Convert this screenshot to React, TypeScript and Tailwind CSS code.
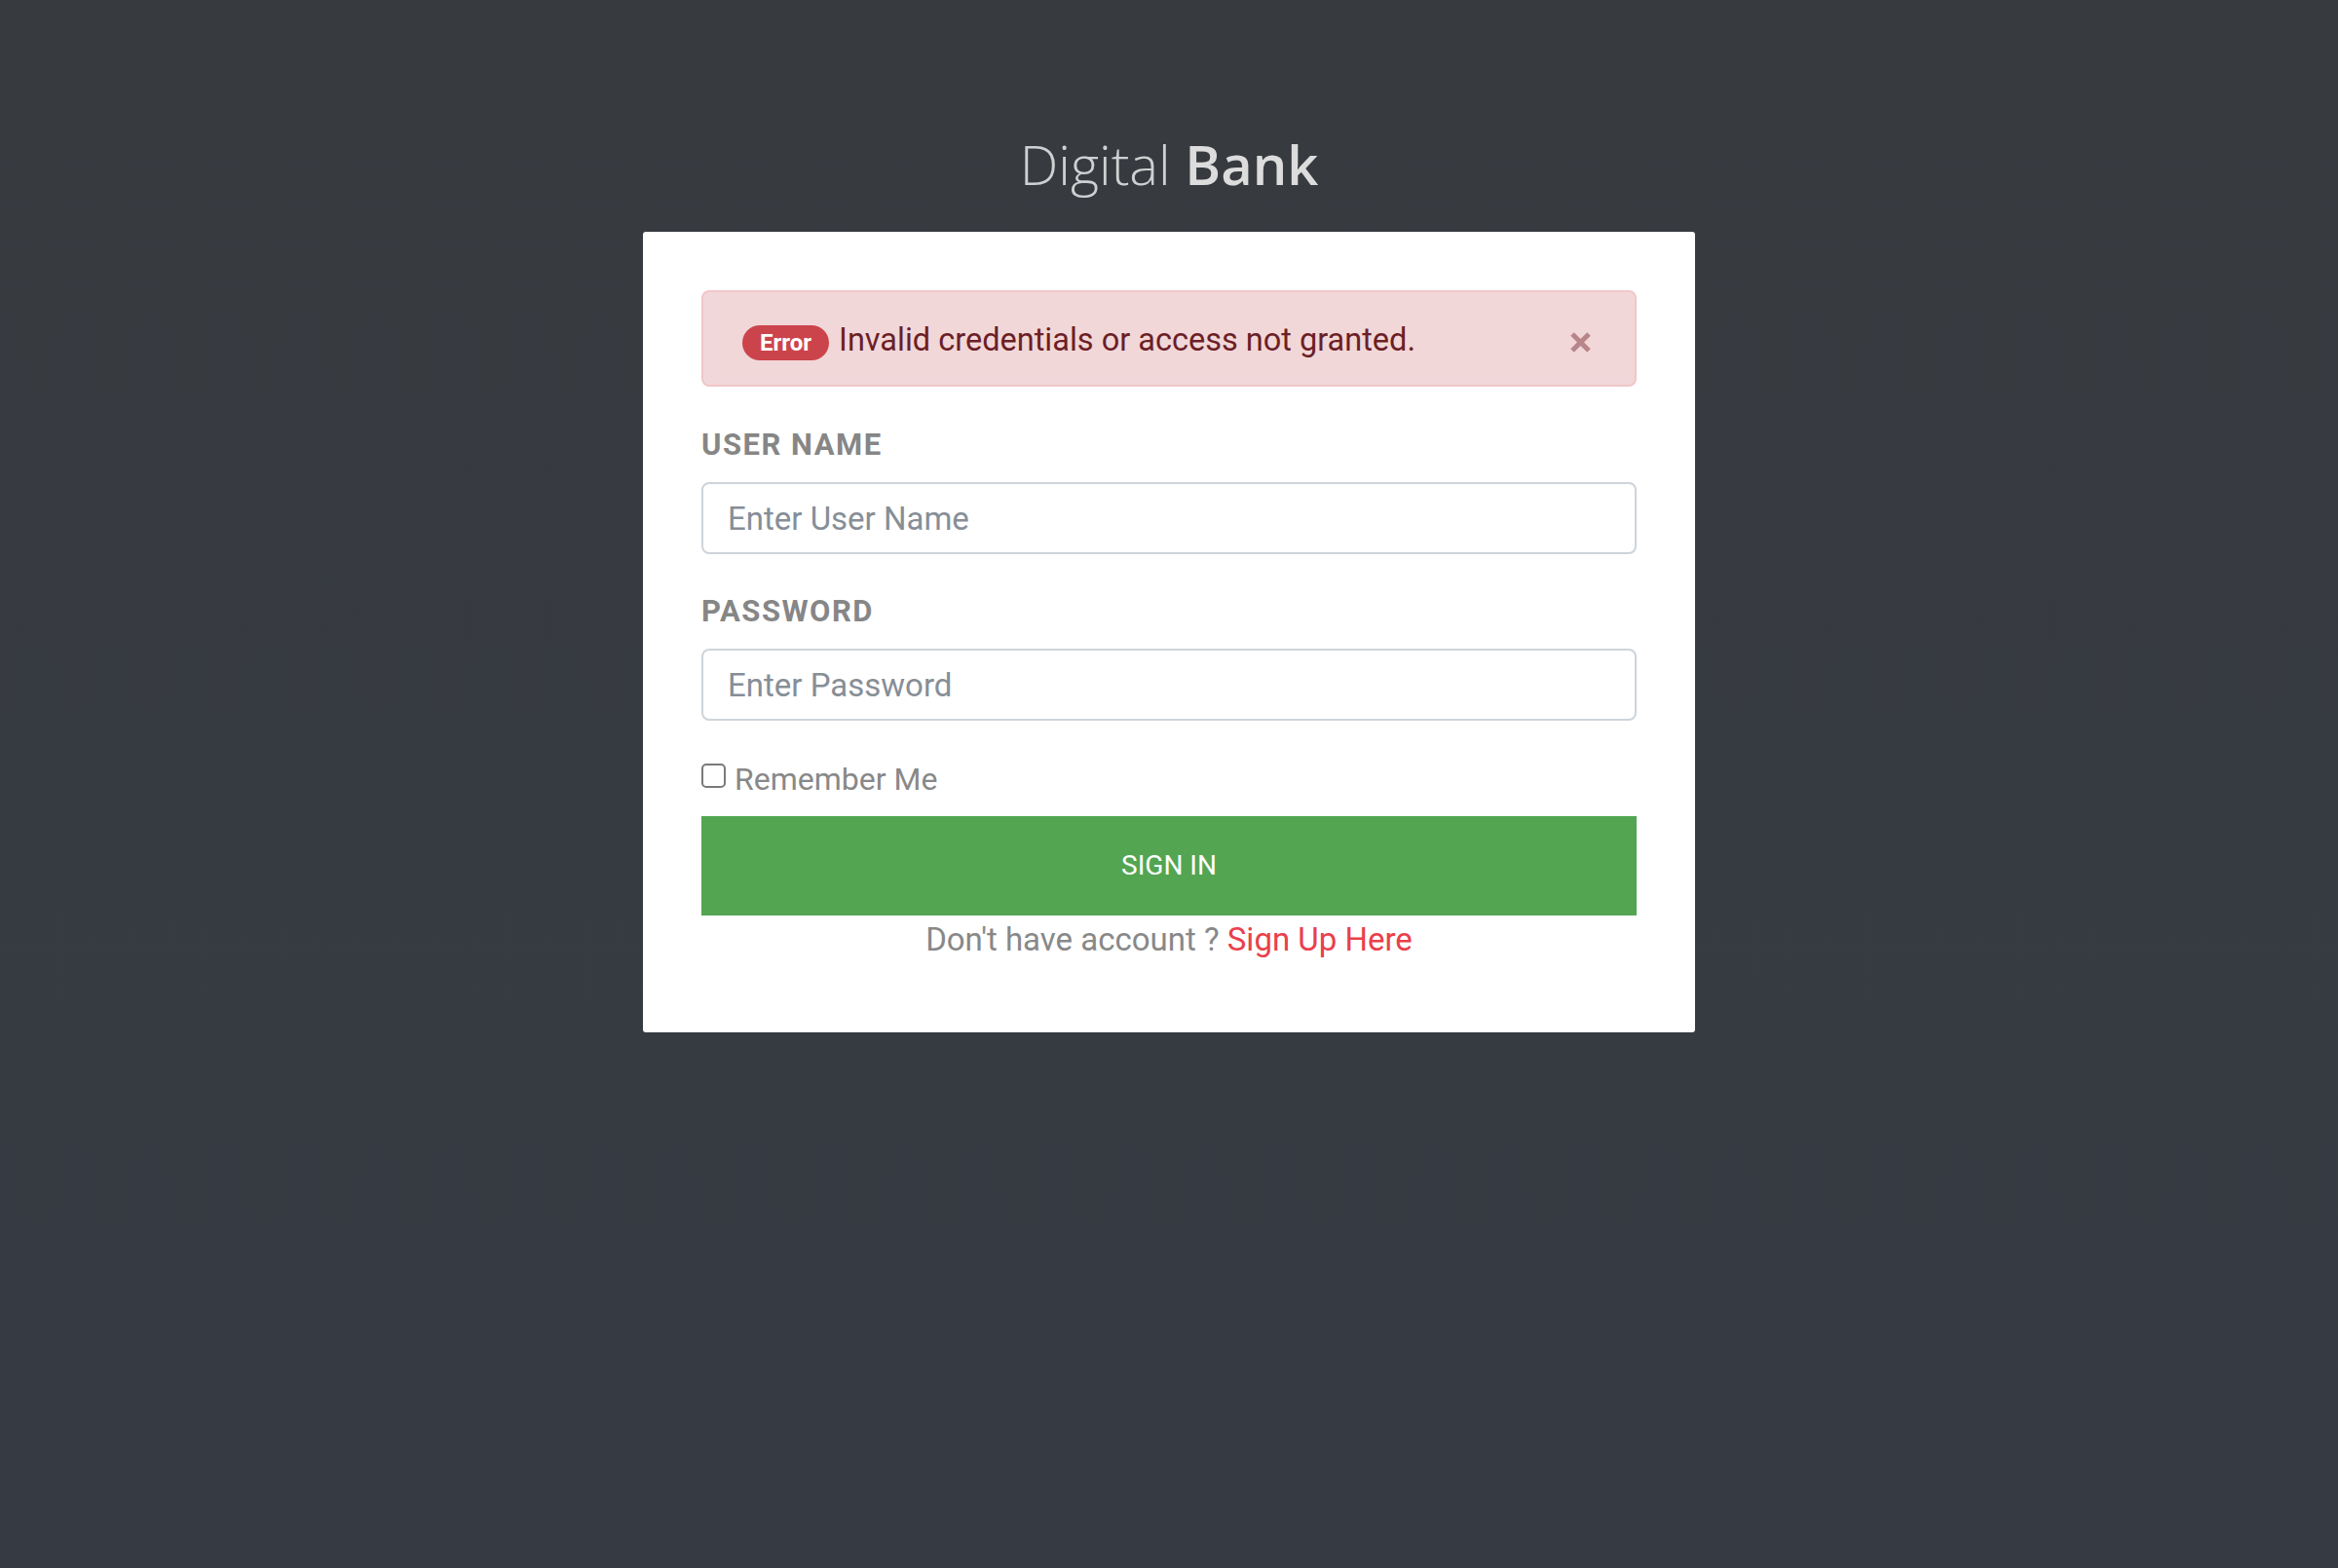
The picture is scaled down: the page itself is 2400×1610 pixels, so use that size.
import React from "react";

const body = "font-['Roboto','Liberation_Sans',sans-serif]";

const FieldLabel: React.FC<{ children: React.ReactNode }> = ({ children }) => (
  <label className="block h-[30px] text-[31px] leading-none font-bold tracking-[1.5px] text-[#868686] mb-[24px]">
    {children}
  </label>
);

const TextField: React.FC<{ placeholder: string; type?: string }> = ({ placeholder, type = "text" }) => (
  <input
    type={type}
    placeholder={placeholder}
    className="block w-full h-[74px] rounded-[8px] border-2 border-[#ced4da] bg-white pl-[25px] text-[33px] text-[#495057] placeholder:text-[#878e96] outline-none"
  />
);

export default function App() {
  return (
    <div className={`min-h-[1610px] w-full bg-gradient-to-b from-[#373b3f] to-[#363a43] pt-[140px] ${body}`}>
      <h1 className="h-[55px] text-center text-[56px] leading-none text-[#cfd0d1] font-['Open_Sans',sans-serif]">
        <span className="font-light">Digital</span>{" "}
        <span className="font-semibold text-[#dcdcdc]">Bank</span>
      </h1>

      <div className="mx-auto mt-[43px] w-[1080px] rounded-[3px] bg-white px-[60px] pt-[60px] pb-[79px]">
        <div className="flex h-[99px] items-center justify-between rounded-[8px] border-2 border-[#f0c6ca] bg-[#f2d7d9] pl-[40px] pr-[44px]">
          <div className="mt-[4px] flex items-baseline gap-[10px]">
            <span className="inline-flex h-[36px] items-center rounded-full bg-[#cc444b] px-[18px] text-[24px] font-bold text-white">
              Error
            </span>
            <span className="text-[32.5px] text-[#6b1f26]">Invalid credentials or access not granted.</span>
          </div>
          <svg width="23" height="25" viewBox="0 0 23 25" className="mt-[8px]">
            <path d="M3 4 L20 21 M20 4 L3 21" stroke="#b7858a" strokeWidth="5" strokeLinecap="butt" />
          </svg>
        </div>

        <div className="mt-[44px]">
          <FieldLabel>USER NAME</FieldLabel>
          <TextField placeholder="Enter User Name" />
        </div>

        <div className="mt-[43px]">
          <FieldLabel>PASSWORD</FieldLabel>
          <TextField placeholder="Enter Password" type="password" />
        </div>

        <div className="mt-[44px] flex items-start gap-[9px]">
          <span className="h-[25px] w-[25px] shrink-0 rounded-[5px] border-2 border-[#7a7a7a] bg-white" />
          <span className="text-[32px] leading-none text-[#888888]">Remember Me</span>
        </div>

        <button className="mt-[22px] flex h-[102px] w-full items-center justify-center bg-[#53a552] text-[28px] text-white">
          SIGN IN
        </button>

        <p className="mt-[8px] h-[33px] text-center text-[33px] leading-none text-[#888888]">
          Don't have account ? <span className="text-[#e9404c]">Sign Up Here</span>
        </p>
      </div>
    </div>
  );
}
